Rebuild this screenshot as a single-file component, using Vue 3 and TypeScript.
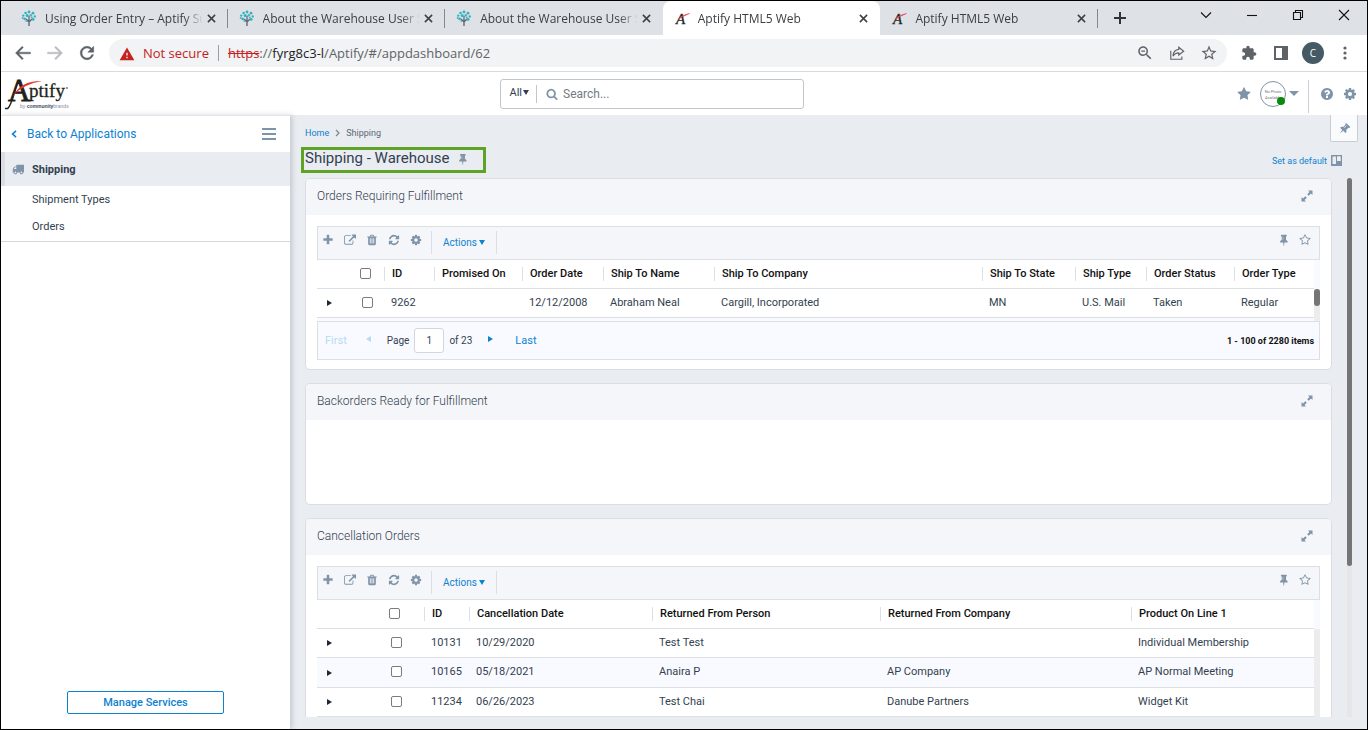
<script setup lang="ts">
import { ref } from 'vue'

interface Column { key: string; label: string; width: string }
interface Grid {
  id: string
  title: string
  leadWidths: [string, string]
  columns: Column[]
  rows: Record<string, string>[]
  paged: boolean
}

const browserTabs = [
  { title: 'Using Order Entry – Aptify Support', icon: 'tree', active: false },
  { title: 'About the Warehouse User Support', icon: 'tree', active: false },
  { title: 'About the Warehouse User Support', icon: 'tree', active: false },
  { title: 'Aptify HTML5 Web', icon: 'aptify', active: true },
  { title: 'Aptify HTML5 Web', icon: 'aptify', active: false },
]

const grids: Grid[] = [
  {
    id: 'orders',
    title: 'Orders Requiring Fulfillment',
    leadWidths: ['30px', '37px'],
    columns: [
      { key: 'id', label: 'ID', width: '50px' },
      { key: 'promised', label: 'Promised On', width: '88px' },
      { key: 'date', label: 'Order Date', width: '81px' },
      { key: 'name', label: 'Ship To Name', width: '111px' },
      { key: 'company', label: 'Ship To Company', width: 'auto' },
      { key: 'state', label: 'Ship To State', width: '93px' },
      { key: 'type', label: 'Ship Type', width: '71px' },
      { key: 'status', label: 'Order Status', width: '88px' },
      { key: 'orderType', label: 'Order Type', width: '80px' },
    ],
    rows: [
      { id: '9262', promised: '', date: '12/12/2008', name: 'Abraham Neal', company: 'Cargill, Incorporated', state: 'MN', type: 'U.S. Mail', status: 'Taken', orderType: 'Regular' },
    ],
    paged: true,
  },
  { id: 'backorders', title: 'Backorders Ready for Fulfillment', leadWidths: ['0', '0'], columns: [], rows: [], paged: false },
  {
    id: 'cancellations',
    title: 'Cancellation Orders',
    leadWidths: ['48px', '59px'],
    columns: [
      { key: 'id', label: 'ID', width: '45px' },
      { key: 'date', label: 'Cancellation Date', width: '183px' },
      { key: 'person', label: 'Returned From Person', width: '228px' },
      { key: 'company', label: 'Returned From Company', width: 'auto' },
      { key: 'product', label: 'Product On Line 1', width: '183px' },
    ],
    rows: [
      { id: '10131', date: '10/29/2020', person: 'Test Test', company: '', product: 'Individual Membership' },
      { id: '10165', date: '05/18/2021', person: 'Anaira P', company: 'AP Company', product: 'AP Normal Meeting' },
      { id: '11234', date: '06/26/2023', person: 'Test Chai', company: 'Danube Partners', product: 'Widget Kit' },
    ],
    paged: false,
  },
]

const page = ref('1')
const query = ref('')

const star = 'M1728 647q0 22-26 48l-363 354 86 500q1 7 1 20 0 21-10.5 35.5t-30.5 14.5q-19 0-40-12l-449-236-449 236q-22 12-40 12-21 0-31.5-14.5t-10.5-35.5q0-6 2-20l86-500-364-354q-25-27-25-48 0-37 56-46l502-73 225-455q19-41 49-41t49 41l225 455 502 73q56 9 56 46z'
const starOutline = 'M1201 1004l306-297-422-62-189-382-189 382-422 62 306 297-73 421 378-199 377 199zm527-357q0 22-26 48l-363 354 86 500q1 7 1 20 0 50-41 50-19 0-40-12l-449-236-449 236q-22 12-40 12-21 0-31.5-14.5t-10.5-35.5q0-6 2-20l86-500-364-354q-25-27-25-48 0-37 56-46l502-73 225-455q19-41 49-41t49 41l225 455 502 73q56 9 56 46z'
const pin = 'M800 864v-448q0-14-9-23t-23-9-23 9-9 23v448q0 14 9 23t23 9 23-9 9-23zm672 352q0 26-19 45t-45 19h-429l-51 483q-2 12-10.5 20.5t-20.5 8.5h-1q-27 0-32-27l-76-485h-404q-26 0-45-19t-19-45q0-123 78.500-221.500t177.500-98.500v-512q-52 0-90-38t-38-90 38-90 90-38h640q52 0 90 38t38 90-38 90-90 38v512q99 0 177.500 98.500t78.500 221.500z'
const cog = 'M1152 896q0-106-75-181t-181-75-181 75-75 181 75 181 181 75 181-75 75-181zm512-109v222q0 12-8 23t-20 13l-185 28q-19 54-39 91 35 50 107 138 10 12 10 25t-9 23q-27 37-99 108t-94 71q-12 0-26-9l-138-108q-44 23-91 38-16 136-29 186-7 28-36 28h-222q-14 0-24.5-8.5t-11.5-21.5l-28-184q-49-16-90-37l-141 107q-10 9-25 9-14 0-25-11-126-114-165-168-7-10-7-23 0-12 8-23 15-21 51-66.5t54-70.5q-27-50-41-99l-183-27q-13-2-21-12.5t-8-23.5v-222q0-12 8-23t19-13l186-28q14-46 39-92-40-57-107-138-10-12-10-24 0-10 9-23 26-36 98.5-107.5t94.5-71.5q13 0 26 10l138 107q44-23 91-38 16-136 29-186 7-28 36-28h222q14 0 24.5 8.5t11.5 21.5l28 184q49 16 90 37l142-107q9-9 24-9 13 0 25 10 129 119 165 170 7 8 7 22 0 12-8 23-15 21-51 66.5t-54 70.5q26 50 41 98l183 28q13 2 21 12.5t8 23.5z'
const question = 'M1024 1376v-192q0-14-9-23t-23-9h-192q-14 0-23 9t-9 23v192q0 14 9 23t23 9h192q14 0 23-9t9-23zm256-672q0-88-55.5-163t-138.5-116-170-41q-243 0-371 213-15 24 8 42l132 100q7 6 19 6 16 0 25-12 53-68 86-92 34-24 86-24 48 0 85.5 26t37.5 59q0 38-20 61t-68 45q-63 28-115.5 86.5t-52.5 125.5v36q0 14 9 23t23 9h192q14 0 23-9t9-23q0-19 21.5-49.5t54.5-49.5q32-18 49-28.5t46-35 44.5-48 28-60.5 12.5-81zm384 192q0 209-103 385.5t-279.5 279.5-385.5 103-385.5-103-279.5-279.5-103-385.5 103-385.5 279.5-279.5 385.5-103 385.5 103 279.5 279.5 103 385.5z'
const truck = 'M640 1408q0-52-38-90t-90-38-90 38-38 90 38 90 90 38 90-38 38-90zm-384-512h384v-256h-158q-13 0-22 9l-195 195q-9 9-9 22v30zm1280 512q0-52-38-90t-90-38-90 38-38 90 38 90 90 38 90-38 38-90zm256-1088v1024q0 15-4 26.5t-13.5 18.5-16.5 11.5-23.5 6-22.5 2-25.5 0-22.5-.5q0 106-75 181t-181 75-181-75-75-181h-384q0 106-75 181t-181 75-181-75-75-181h-64q-3 0-22.5.5t-25.5 0-22.5-2-23.5-6-16.5-11.5-13.5-18.5-4-26.5q0-26 19-45t45-19v-320q0-8-.5-35t0-38 2.5-34.5 6.5-37 14-30.5 22.5-30l198-198q19-19 50.5-32t58.5-13h160v-192q0-26 19-45t45-19h1024q26 0 45 19t19 45z'
const searchGlass = 'M1216 832q0-185-131.5-316.5t-316.5-131.5-316.5 131.5-131.5 316.5 131.5 316.5 316.5 131.5 316.5-131.5 131.5-316.5zm512 832q0 52-38 90t-90 38q-54 0-90-38l-343-342q-179 124-399 124-143 0-273.5-55.5t-225-150-150-225-55.5-273.5 55.5-273.5 150-225 225-150 273.5-55.5 273.5 55.5 225 150 150 225 55.5 273.5q0 220-124 399l343 343q37 37 37 90z'

const gridTools = [
  { label: 'New record', box: '0 0 1792 1792', d: 'M1600 736v192q0 40-28 68t-68 28h-416v416q0 40-28 68t-68 28h-192q-40 0-68-28t-28-68v-416h-416q-40 0-68-28t-28-68v-192q0-40 28-68t68-28h416v-416q0-40 28-68t68-28h192q40 0 68 28t28 68v416h416q40 0 68 28t28 68z' },
  { label: 'Open record', box: '64 0 1792 1792', d: 'M1472 989v320q0 119-84.5 203.5t-203.5 84.5h-832q-119 0-203.5-84.5t-84.5-203.5v-832q0-119 84.5-203.5t203.5-84.5h704q14 0 23 9t9 23v64q0 14-9 23t-23 9h-704q-66 0-113 47t-47 113v832q0 66 47 113t113 47h832q66 0 113-47t47-113v-320q0-14 9-23t23-9h64q14 0 23 9t9 23zm384-864v512q0 26-19 45t-45 19-45-19l-176-176-652 652q-10 10-23 10t-23-10l-114-114q-10-10-10-23t10-23l652-652-176-176q-19-19-19-45t19-45 45-19h512q26 0 45 19t19 45z' },
  { label: 'Delete record', box: '0 0 1792 1792', d: 'M704 1376v-704q0-14-9-23t-23-9h-64q-14 0-23 9t-9 23v704q0 14 9 23t23 9h64q14 0 23-9t9-23zm256 0v-704q0-14-9-23t-23-9h-64q-14 0-23 9t-9 23v704q0 14 9 23t23 9h64q14 0 23-9t9-23zm256 0v-704q0-14-9-23t-23-9h-64q-14 0-23 9t-9 23v704q0 14 9 23t23 9h64q14 0 23-9t9-23zm-544-992h448l-48-117q-7-9-17-11h-317q-10 2-17 11zm928 32v64q0 14-9 23t-23 9h-96v948q0 83-47 143.5t-113 60.5h-832q-66 0-113-58.5t-47-141.5v-952h-96q-14 0-23-9t-9-23v-64q0-14 9-23t23-9h309l70-167q15-37 54-63t79-26h320q40 0 79 26t54 63l70 167h309q14 0 23 9t9 23z' },
  { label: 'Refresh', box: '0 0 1792 1792', d: 'M1639 1056q0 5-1 7-64 268-268 434.5t-478 166.5q-146 0-282.5-55t-243.5-157l-129 129q-19 19-45 19t-45-19-19-45v-448q0-26 19-45t45-19h448q26 0 45 19t19 45-19 45l-137 137q71 66 161 102t187 36q134 0 250-65t186-179q11-17 53-117 8-23 30-23h192q13 0 22.5 9.5t9.5 22.5zm25-800v448q0 26-19 45t-45 19h-448q-26 0-45-19t-19-45 19-45l138-138q-148-137-349-137-134 0-250 65t-186 179q-11 17-53 117-8 23-30 23h-199q-13 0-22.5-9.5t-9.5-22.5v-7q65-268 270-434.5t480-166.5q146 0 284 55.5t245 156.5l130-129q19-19 45-19t45 19 19 45z' },
  { label: 'Settings', box: '0 0 1792 1792', d: cog },
]
</script>

<template>
  <div class="window">
    <header class="tab-strip">
      <div class="tabs">
        <div v-for="(tab, i) in browserTabs" :key="i" class="tab" :class="{ active: tab.active, 'no-line': i === 2 }">
          <svg v-if="tab.icon === 'tree'" class="favicon" viewBox="0 0 16 16" aria-hidden="true">
            <path d="M8 6v10M8 12L5 9M8 12l3-3" stroke="#5d6b78" stroke-width="1.4" fill="none" />
            <g fill="#2fb5be">
              <circle cx="8" cy="2" r="1.4" /><circle cx="4.600" cy="3" r="1.300" /><circle cx="12" cy="3.200" r="1.400" />
              <circle cx="2.200" cy="5.600" r="1.200" /><circle cx="6.200" cy="5.400" r="1.500" /><circle cx="13.800" cy="6.400" r="1.200" />
              <circle cx="3.600" cy="8.800" r="1.400" /><circle cx="12.200" cy="9.400" r="1.400" />
            </g>
            <g fill="#6fa4b5">
              <circle cx="9.800" cy="5.200" r="1.300" /><circle cx="8" cy="8" r="1.200" /><circle cx="1.600" cy="8" r=".9" />
              <circle cx="10.800" cy="7.400" r="1" /><circle cx="5.400" cy="11" r="1" />
            </g>
          </svg>
          <svg v-else class="favicon" viewBox="0 0 16 16" aria-hidden="true">
            <text x="2" y="14" font-family="Liberation Serif, serif" font-size="15" font-style="italic" fill="#222" stroke="#222" stroke-width=".3">A</text>
            <path d="M4 9Q9 4.500 15.500 3.500Q10 6 4 9z" fill="#e0454a" stroke="#e0454a" stroke-width=".5" />
          </svg>
          <span class="tab-title">{{ tab.title }}</span>
          <button class="tab-close" aria-label="Close tab">
            <svg viewBox="0 0 10 10"><path d="M1 1l8 8M9 1L1 9" stroke="#3c4043" stroke-width="1.700" /></svg>
          </button>
        </div>
      </div>
      <button class="new-tab" aria-label="New tab">
        <svg viewBox="0 0 12 12"><path d="M6 0v12M0 6h12" stroke="#303337" stroke-width="2" /></svg>
      </button>
      <div class="window-buttons">
        <button aria-label="Search tabs"><svg viewBox="0 0 12 12"><path d="M1 3.500l5 5 5-5" /></svg></button>
        <button aria-label="Minimize"><svg viewBox="0 0 12 12"><path d="M1 6.500h10" /></svg></button>
        <button aria-label="Restore"><svg viewBox="0 0 12 12"><path d="M1.500 3.500h7v7h-7zM3.500 3.500v-2h7v7h-2" /></svg></button>
        <button aria-label="Close"><svg viewBox="0 0 12 12"><path d="M1 1l10 10M11 1L1 11" /></svg></button>
      </div>
    </header>

    <div class="address-row">
      <button class="nav-button" aria-label="Back"><svg viewBox="0 0 24 24"><path d="M21 11H6.830l5.590-5.590L11 4l-8 8 8 8 1.410-1.410L6.830 13H21v-2z" fill="#5f6368" stroke="#5f6368" stroke-width=".5" /></svg></button>
      <button class="nav-button" aria-label="Forward"><svg viewBox="0 0 24 24"><path d="M3 11h14.170l-5.590-5.590L13 4l8 8-8 8-1.410-1.410L17.170 13H3v-2z" fill="#b9bbbe" stroke="#b9bbbe" stroke-width=".5" /></svg></button>
      <button class="nav-button" aria-label="Reload"><svg viewBox="0 0 24 24"><path d="M17.650 6.350C16.200 4.900 14.210 4 12 4c-4.420 0-7.990 3.580-7.990 8s3.570 8 7.990 8c3.730 0 6.840-2.550 7.730-6h-2.080c-.82 2.330-3.040 4-5.650 4-3.310 0-6-2.690-6-6s2.690-6 6-6c1.660 0 3.140.69 4.220 1.780L13 11h7V4l-2.350 2.350z" fill="#5f6368" stroke="#5f6368" stroke-width=".6" /></svg></button>
      <div class="omnibox">
        <svg class="warning" viewBox="0 0 24 22" aria-hidden="true"><path d="M1 21h22L12 2 1 21zm12-3h-2v-2h2v2zm0-4h-2v-4h2v4z" fill="#c5221f" /></svg>
        <span class="not-secure">Not secure</span>
        <span class="omni-line"></span>
        <span class="url"><s>https</s>://<b>fyrg8c3-l</b>/Aptify/#/appdashboard/62</span>
        <button aria-label="Zoom"><svg viewBox="0 0 24 24"><path d="M15.500 14h-.79l-.28-.27C15.410 12.590 16 11.110 16 9.500 16 5.910 13.090 3 9.500 3S3 5.910 3 9.500 5.910 16 9.500 16c1.610 0 3.090-.59 4.230-1.570l.27.28v.79l5 4.990L20.490 19l-4.990-5zm-6 0C7.010 14 5 11.990 5 9.500S7.010 5 9.500 5 14 7.010 14 9.500 11.990 14 9.500 14zM7 8.700h5v1.600H7z" fill="#5f6368" /></svg></button>
        <button aria-label="Share"><svg viewBox="0 0 18 18" fill="none" stroke="#5f6368" stroke-width="1.300"><path d="M2 6.500V16h12.500v-3M11 2.500l5.500 4.500L11 11.300V8.800Q6.500 8.800 4.500 12.500Q5 5.500 11 5z" /></svg></button>
        <button aria-label="Bookmark"><svg viewBox="0 0 24 24"><path d="M22 9.240l-7.190-.62L12 2 9.190 8.630 2 9.240l5.460 4.730L5.820 21 12 17.270 18.180 21l-1.630-7.030L22 9.240zM12 15.400l-3.760 2.270 1-4.280-3.320-2.880 4.380-.38L12 6.100l1.710 4.040 4.380.38-3.320 2.880 1 4.280L12 15.400z" fill="#5f6368" /></svg></button>
      </div>
      <div class="browser-actions">
        <button aria-label="Extensions"><svg viewBox="0 0 24 24"><path d="M20.500 11H19V7c0-1.100-.9-2-2-2h-4V3.500C13 2.120 11.880 1 10.500 1S8 2.120 8 3.500V5H4c-1.100 0-1.990.9-1.990 2v3.800H3.500c1.490 0 2.700 1.210 2.700 2.700s-1.210 2.700-2.700 2.700H2V20c0 1.100.9 2 2 2h3.800v-1.500c0-1.490 1.210-2.700 2.700-2.700 1.490 0 2.700 1.210 2.700 2.700V22H17c1.100 0 2-.9 2-2v-4h1.500c1.380 0 2.500-1.120 2.500-2.500S21.880 11 20.500 11z" fill="#5f6368" /></svg></button>
        <button aria-label="Side panel"><svg viewBox="0 0 16 16"><path d="M1 1h14v14H1zM3 3v10h6V3z" fill="#5f6368" fill-rule="evenodd" /></svg></button>
        <button class="profile" aria-label="Profile">C</button>
        <button aria-label="Menu"><svg viewBox="0 0 16 16" fill="#5f6368"><circle cx="8" cy="3" r="1.600" /><circle cx="8" cy="8" r="1.600" /><circle cx="8" cy="13" r="1.600" /></svg></button>
      </div>
    </div>

    <header class="app-header">
      <svg class="logo" viewBox="0 0 64 34" role="img" aria-label="Aptify by communitybrands">
        <path d="M0 31.500h2.800C7.500 27 8.500 14 14 3" stroke="#231f20" stroke-width="1.500" fill="none" />
        <text x="3" y="24" font-family="Liberation Serif, serif" font-size="31" fill="#231f20" stroke="#231f20" stroke-width=".8">A</text>
        <path d="M8 19Q16 3.500 37 4Q18 7 8 19z" fill="#e5352d" />
        <text x="24" y="20" font-family="Liberation Serif, serif" font-size="19" fill="#231f20" stroke="#231f20" stroke-width=".3">ptify</text>
        <circle cx="62" cy="11" r="1" fill="#777" />
        <text x="15" y="31" font-family="Liberation Sans, sans-serif" font-size="5" fill="#7d8b99">by <tspan font-weight="bold" fill="#3d4b5c">community</tspan>brands</text>
      </svg>
      <form class="search" @submit.prevent>
        <button type="button" class="scope">All<span class="caret"></span></button>
        <label class="search-field">
          <svg viewBox="0 0 1792 1792" aria-hidden="true"><path :d="searchGlass" /></svg>
          <input v-model="query" type="text" placeholder="Search..." aria-label="Search" />
        </label>
      </form>
      <div class="user-tools">
        <button class="fav" aria-label="Favorites"><svg viewBox="0 0 1792 1792"><path :d="star" /></svg></button>
        <button class="user" aria-label="User menu">
          <span class="photo">No Photo<br />Available<span class="presence"></span></span>
          <span class="caret wide"></span>
        </button>
        <span class="divider"></span>
        <button class="help" aria-label="Help"><svg viewBox="0 0 1792 1792"><path :d="question" /></svg></button>
        <button class="gear" aria-label="Settings"><svg viewBox="0 0 1792 1792"><path :d="cog" /></svg></button>
      </div>
    </header>

    <div class="body">
      <aside class="sidebar">
        <div class="side-top">
          <a href="#" class="back">
            <svg viewBox="0 0 6 8" aria-hidden="true"><path d="M5 .8L1.600 4 5 7.200" fill="none" stroke="#0d82cf" stroke-width="1.600" /></svg>
            Back to Applications
          </a>
          <button class="burger" aria-label="Toggle menu"><svg viewBox="0 0 14 12"><path d="M0 1h14M0 6h14M0 11h14" stroke="#7f94a8" stroke-width="2" /></svg></button>
        </div>
        <nav>
          <a href="#" class="group"><svg viewBox="0 0 1792 1792" aria-hidden="true"><path :d="truck" /></svg>Shipping</a>
          <a href="#" class="item">Shipment Types</a>
          <a href="#" class="item">Orders</a>
        </nav>
        <button class="manage">Manage Services</button>
      </aside>

      <main>
        <button class="pin-tab" aria-label="Pin panel"><svg viewBox="0 0 1792 1792"><path :d="pin" transform="translate(128 0) rotate(45 768 896)" /></svg></button>
        <nav class="crumbs" aria-label="Breadcrumb">
          <a href="#">Home</a>
          <svg viewBox="0 0 5 8" aria-hidden="true"><path d="M1 1l3 3-3 3" fill="none" stroke="#7c8794" stroke-width="1.200" /></svg>
          <span>Shipping</span>
        </nav>
        <div class="title-row">
          <div class="title-box">
            <h1>Shipping - Warehouse</h1>
            <button aria-label="Pin page"><svg viewBox="0 0 1536 1792"><path :d="pin" /></svg></button>
          </div>
          <a href="#" class="set-default">
            Set as default
            <svg viewBox="0 0 11 11" aria-hidden="true"><path d="M0 0h11v11H0zM1.500 1.500v7.500h3.500V1.500zM6.200 1.500v4.500h3.300V1.500z" fill="#7f94a8" fill-rule="evenodd" /><path d="M6 1.500h3.500V6H6z" fill="#f4eee6" /></svg>
          </a>
        </div>

        <div class="scroll-area">
          <div class="cards">
            <section v-for="grid in grids" :key="grid.id" class="card">
              <header>
                <h2>{{ grid.title }}</h2>
                <button aria-label="Expand"><svg viewBox="0 0 12 12"><path d="M7 .5h4.500V5L10 3.500 7.700 5.800 6.200 4.300 8.500 2zM5 11.500H.5V7L2 8.500l2.300-2.300 1.500 1.500L3.500 10z" /></svg></button>
              </header>
              <div v-if="!grid.columns.length" class="empty"></div>
              <div v-else class="card-body">
                <div class="grid-tools">
                  <button v-for="tool in gridTools" :key="tool.label" class="tool" :aria-label="tool.label">
                    <svg :viewBox="tool.box"><path :d="tool.d" /></svg>
                  </button>
                  <button class="actions">Actions<span class="caret blue"></span></button>
                  <span class="spacer"></span>
                  <button class="tool" aria-label="Pin view"><svg viewBox="-128 0 1792 1792"><path :d="pin" /></svg></button>
                  <button class="tool" aria-label="Favorite view"><svg viewBox="0 0 1792 1792"><path :d="starOutline" /></svg></button>
                </div>
                <div class="grid-view" :class="{ short: grid.paged }">
                  <table>
                    <colgroup>
                      <col v-for="(w, i) in grid.leadWidths" :key="i" :style="{ width: w }" />
                      <col v-for="c in grid.columns" :key="c.key" :style="{ width: c.width }" />
                    </colgroup>
                    <thead>
                      <tr>
                        <th></th>
                        <th class="check"><input type="checkbox" aria-label="Select all rows" /></th>
                        <th v-for="c in grid.columns" :key="c.key"><span>{{ c.label }}</span></th>
                      </tr>
                    </thead>
                    <tbody>
                      <tr v-for="row in grid.rows" :key="row.id">
                        <td><button class="expander" aria-label="Expand row"></button></td>
                        <td class="check"><input type="checkbox" :aria-label="'Select ' + row.id" /></td>
                        <td v-for="c in grid.columns" :key="c.key">{{ row[c.key] }}</td>
                      </tr>
                    </tbody>
                  </table>
                  <div class="grid-track"><div v-if="grid.paged" class="grid-thumb"></div></div>
                </div>
                <footer v-if="grid.paged" class="pager">
                  <button class="first" disabled>First</button>
                  <button class="prev" aria-label="Previous page" disabled></button>
                  <label>Page <input v-model="page" type="text" /></label>
                  <span class="of">of 23</span>
                  <button class="next" aria-label="Next page"></button>
                  <button class="last">Last</button>
                  <strong>1 - 100 of 2280 items</strong>
                </footer>
              </div>
            </section>
          </div>
          <div class="page-track"><div class="page-thumb"></div></div>
        </div>
      </main>
    </div>
  </div>
</template>

<style>
body { margin: 0; }
</style>

<style scoped>
* { box-sizing: border-box; }
button, input { font: inherit; color: inherit; }
button { background: none; border: 0; padding: 0; margin: 0; display: flex; align-items: center; justify-content: center; }
a { text-decoration: none; color: #0d82cf; }
svg { display: block; flex: none; }
h1, h2 { margin: 0; }

.window {
  height: 100vh; display: flex; flex-direction: column; border: 1px solid #000;
  overflow: hidden; background: #fff; color: #333f4f;
  font-family: Roboto, "Liberation Sans", sans-serif; font-size: 11px;
}

/* browser chrome */
.tab-strip { display: flex; height: 34px; padding-left: 9px; background: #dee1e6; font-family: "Open Sans", "Noto Sans", sans-serif; font-size: 12px; color: #3c4043; }
.tabs { display: flex; flex: 0 1 1088px; min-width: 0; }
.tab { position: relative; flex: 1; display: flex; align-items: center; padding: 0 12px 0 11px; min-width: 0; border-radius: 8px 8px 0 0; }
.tab::after { content: ""; position: absolute; right: 0; top: 8px; width: 1px; height: 19px; background: #85888d; }
.tab.active::after, .tab.no-line::after { display: none; }
.tab.active { background: #fff; }
.favicon { width: 16px; height: 16px; margin-right: 8px; }
.tab-title { flex: 1; min-width: 0; white-space: nowrap; overflow: hidden; -webkit-mask-image: linear-gradient(90deg, #000 88%, transparent); mask-image: linear-gradient(90deg, #000 88%, transparent); }
.tab-close { width: 9px; height: 16px; margin-left: 4px; }
.tab-close svg { width: 9px; height: 9px; }
.new-tab { width: 44px; }
.new-tab svg { width: 12px; height: 12px; }
.window-buttons { margin-left: auto; display: flex; height: 28px; }
.window-buttons button { width: 46px; }
.window-buttons svg { width: 12px; height: 12px; fill: none; stroke: #111; stroke-width: 1.1; }

.address-row { display: flex; align-items: center; height: 37px; padding: 0 6px; border-bottom: 1px solid #d9dadc; font-family: "Open Sans", "Noto Sans", sans-serif; font-size: 13px; color: #5f6368; }
.nav-button { width: 32px; height: 28px; }
.nav-button svg { width: 20px; height: 20px; }
.omnibox { flex: 1; display: flex; align-items: center; height: 28px; margin-left: 6px; padding: 0 2px 0 10px; border-radius: 14px; background: #f1f3f4; }
.warning { width: 16px; height: 15px; margin-right: 8px; }
.not-secure { color: #c5221f; }
.omni-line { width: 1px; height: 16px; margin: 0 9px; background: #9a9da1; }
.url { flex: 1; white-space: nowrap; }
.url s { color: #c5221f; }
.url b { font-weight: 400; color: #202124; }
.omnibox button { width: 32px; height: 28px; }
.omnibox button svg { width: 18px; height: 18px; }
.omnibox button:nth-last-child(2) svg { width: 16px; height: 16px; }
.browser-actions { display: flex; align-items: center; margin-left: 6px; }
.browser-actions button { width: 32px; height: 28px; }
.browser-actions svg { width: 16px; height: 16px; }
.browser-actions .profile { width: 22px; height: 22px; margin: 0 5px; border-radius: 50%; background: #455a64; color: #fff; font-size: 10px; }

/* application header */
.app-header { display: grid; grid-template-columns: 495fr 304px 554fr; align-items: center; height: 43px; padding: 0 10px 0 4px; }
.logo { width: 64px; height: 34px; }
.search { display: flex; align-items: center; height: 30px; border: 1px solid #c2c6ca; border-radius: 3px; }
.scope { height: 18px; padding: 0 7px 2px 9px; border-right: 1px solid #c2c6ca; gap: 1px; font-size: 11px; }
.caret { width: 0; height: 0; border: 3px solid transparent; border-top: 5px solid #333f4f; border-bottom: 0; }
.caret.wide { border-width: 5px 5px 0; border-top-color: #7f94a8; }
.caret.blue { border-top-color: #0d82cf; }
.search-field { flex: 1; display: flex; align-items: center; padding-left: 9px; gap: 5px; }
.search-field svg { width: 12px; height: 12px; fill: #7f94a8; }
.search-field input { flex: 1; min-width: 0; border: 0; padding: 0; outline: 0; background: none; font-size: 12px; }
.search-field input::placeholder { color: #757b82; opacity: 1; }
.user-tools { display: flex; justify-content: flex-end; align-items: center; fill: #7f94a8; }
.user-tools .fav svg { width: 14px; height: 14px; }
.user { margin-left: 9px; gap: 3px; }
.photo { position: relative; width: 26px; height: 26px; border: 1px solid #7f94a8; border-radius: 50%; padding-top: 7px; font-size: 4px; line-height: 6px; color: #777; white-space: nowrap; text-align: center; }
.presence { position: absolute; right: 0; bottom: 1px; width: 8px; height: 8px; border-radius: 50%; background: #0a8a0a; }
.divider { width: 1px; height: 33px; margin: 5px 11px 0 9px; background: #ccd0d4; }
.help svg, .gear svg { width: 14px; height: 14px; }
.gear { margin-left: 9px; }

/* sidebar */
.body { flex: 1; min-height: 0; display: flex; }
.sidebar { position: relative; z-index: 1; width: 289px; display: flex; flex-direction: column; background: #fff; border-top: 1px solid #e2e5e9; box-shadow: 2px 0 5px rgba(60, 75, 90, .22); }
.side-top { display: flex; align-items: center; justify-content: space-between; height: 36px; padding: 0 14px 0 10px; }
.back { display: flex; align-items: center; gap: 10px; font-size: 12px; }
.back svg { width: 6px; height: 8px; }
.burger svg { width: 14px; height: 12px; }
.sidebar nav { padding-bottom: 1px; border-bottom: 1px solid #d5d8db; }
.group { display: flex; align-items: center; height: 34px; padding-left: 7px; border-left: 4px solid #dadde4; background: #e9ecf1; color: #333f4f; font-weight: 700; }
.group svg { width: 12px; height: 12px; margin-right: 8px; fill: #7f94a8; }
.item { display: flex; align-items: center; height: 27px; padding-left: 31px; color: #333f4f; }
.manage { width: 157px; height: 23px; margin: auto auto 15px 66px; border: 1px solid #0d82cf; border-radius: 2px; color: #0d82cf; font-weight: 500; }

/* dashboard */
main { position: relative; flex: 1; min-width: 0; display: flex; flex-direction: column; padding: 10px 15px 12px 15px; background: #e9ecf1; }
.pin-tab { position: absolute; top: 0; right: 9px; width: 28px; height: 27px; background: #fafbfd; border: 1px solid #c9cdd2; border-top: 0; border-radius: 0 0 2px 2px; }
.pin-tab svg { width: 12px; height: 12px; fill: #7f94a8; }
.crumbs { display: flex; align-items: center; gap: 6px; height: 16px; font-size: 9px; color: #5d6874; }
.crumbs svg { width: 5px; height: 8px; }
.title-row { display: flex; align-items: center; justify-content: space-between; margin: 6px 10px 4px -4px; }
.title-box { display: flex; align-items: flex-start; gap: 7px; width: 185px; height: 26px; border: 3px solid #5ea226; padding-left: 1px; margin-bottom: 1px; }
h1 { font-size: 15px; line-height: 16px; font-weight: 400; white-space: nowrap; }
.title-box button { height: 18px; }
.title-box svg { width: 10px; height: 12px; fill: #7f94a8; }
.set-default { display: flex; align-items: center; gap: 4px; font-size: 9px; }
.set-default svg { width: 11px; height: 11px; }
.scroll-area { flex: 1; min-height: 0; display: flex; justify-content: space-between; }
.cards { flex: 1; min-width: 0; overflow: hidden; margin-right: 15px; }
.page-track { width: 5px; background: #e5e6e8; }
.page-thumb { height: 72%; border-radius: 3px; background: #757575; }

.card { margin-bottom: 13px; border: 1px solid #dadde1; border-radius: 5px; background: #fff; overflow: hidden; }
.card > header { display: flex; align-items: center; justify-content: space-between; height: 36px; padding: 0 18px 2px 11px; background: #f5f6fa; }
h2 { font-size: 12px; font-weight: 300; }
.card > header svg { width: 12px; height: 12px; fill: #7f94a8; }
.empty { height: 84px; }
.card-body { padding: 11px 11px 9px; }
.grid-tools { display: flex; align-items: flex-start; gap: 4px; height: 34px; padding: 3px 5px 0 1px; border: 1px solid #dcdfe4; background: #f5f6fa; }
.tool { width: 18px; height: 20px; }
.tool svg { width: 12px; height: 12px; fill: #7f94a8; }
.actions { height: 23px; margin: 1px 0 0 2px; padding: 0 11px; gap: 2px; border: solid #dcdfe4; border-width: 0 1px; font-size: 10px; color: #0d82cf; }
.spacer { flex: 1; }
.grid-view { display: flex; overflow: hidden; background: #f9faff; }
.grid-view.short { height: 61px; }
table { flex: 1; min-width: 0; width: 100%; table-layout: fixed; border-spacing: 0; align-self: flex-start; }
th, td { height: 29px; padding: 0 0 2px 7px; text-align: left; white-space: nowrap; border-bottom: 1px solid #dcdfe4; background: #fff; }
th { padding: 0; font-weight: 500; color: #111; }
th span { display: block; height: 14px; line-height: 14px; padding-left: 7px; border-left: 1px solid #dcdfe4; }
tbody tr:nth-child(even) td { height: 30px; background: #f9faff; }
th.check, td.check { padding: 0 0 2px; text-align: center; }
td.check { padding-left: 4px; }
.check input { appearance: none; display: block; width: 11px; height: 11px; margin: 0 auto; border: 1px solid #7b7b7b; border-radius: 2px; background: #fff; }
.expander { width: 0; height: 0; margin: 2px 0 0 3px; border: solid transparent; border-width: 3px 0 3px 5px; border-left-color: #1d2733; }
.grid-track { width: 6px; margin-top: 29px; background: #ececec; }
.grid-thumb { height: 17px; border-radius: 3px; background: #757575; }

.pager { display: flex; align-items: center; height: 39px; padding: 0 5px 0 7px; border: 1px solid #dcdfe4; background: #f9faff; font-size: 10px; }
.pager .first { color: #b5dcf4; font-size: 11px; }
.prev, .next { width: 0; height: 0; border: 3px solid transparent; }
.prev { margin: 0 16px 3px 19px; border-width: 3px 5px 3px 0; border-right-color: #b5dcf4; }
.next { margin: 0 22px 3px 16px; border-width: 3px 0 3px 5px; border-left-color: #0d82cf; }
.pager label { display: flex; align-items: center; gap: 5px; }
.pager input { width: 30px; height: 25px; border: 1px solid #d3d7dc; border-radius: 3px; background: #fff; text-align: center; padding: 0; }
.of { margin-left: 5px; }
.last { color: #0d82cf; font-size: 11px; }
.pager strong { margin-left: auto; font-size: 9px; font-weight: 700; color: #111; }
</style>
